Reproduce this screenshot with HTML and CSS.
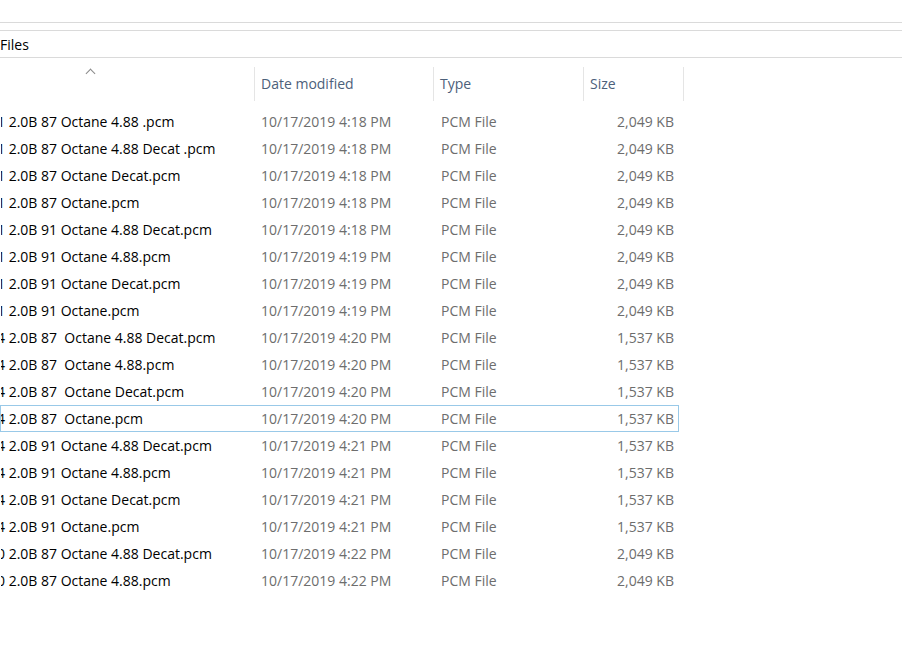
FILE: index.html
```html
<!DOCTYPE html>
<html lang="en">
<head>
  <meta charset="UTF-8">
  <title>Files</title>
  <link rel="stylesheet" href="styles.css">
</head>
<body>
  <div class="ribbon"></div>
  <div class="address"><span class="crumb">Files</span></div>

  <div class="list-header">
    <div class="col name-col"><span class="sort-arrow"></span></div>
    <div class="col">Date modified</div>
    <div class="col">Type</div>
    <div class="col">Size</div>
  </div>

  <div class="rows">
    <div class="row"><span class="name">1 2.0B 87 Octane 4.88 .pcm</span><span>10/17/2019 4:18 PM</span><span>PCM File</span><span class="size">2,049 KB</span></div>
    <div class="row"><span class="name">1 2.0B 87 Octane 4.88 Decat .pcm</span><span>10/17/2019 4:18 PM</span><span>PCM File</span><span class="size">2,049 KB</span></div>
    <div class="row"><span class="name">1 2.0B 87 Octane Decat.pcm</span><span>10/17/2019 4:18 PM</span><span>PCM File</span><span class="size">2,049 KB</span></div>
    <div class="row"><span class="name">1 2.0B 87 Octane.pcm</span><span>10/17/2019 4:18 PM</span><span>PCM File</span><span class="size">2,049 KB</span></div>
    <div class="row"><span class="name">1 2.0B 91 Octane 4.88 Decat.pcm</span><span>10/17/2019 4:18 PM</span><span>PCM File</span><span class="size">2,049 KB</span></div>
    <div class="row"><span class="name">1 2.0B 91 Octane 4.88.pcm</span><span>10/17/2019 4:19 PM</span><span>PCM File</span><span class="size">2,049 KB</span></div>
    <div class="row"><span class="name">1 2.0B 91 Octane Decat.pcm</span><span>10/17/2019 4:19 PM</span><span>PCM File</span><span class="size">2,049 KB</span></div>
    <div class="row"><span class="name">1 2.0B 91 Octane.pcm</span><span>10/17/2019 4:19 PM</span><span>PCM File</span><span class="size">2,049 KB</span></div>
    <div class="row"><span class="name">4 2.0B 87&nbsp; Octane 4.88 Decat.pcm</span><span>10/17/2019 4:20 PM</span><span>PCM File</span><span class="size">1,537 KB</span></div>
    <div class="row"><span class="name">4 2.0B 87&nbsp; Octane 4.88.pcm</span><span>10/17/2019 4:20 PM</span><span>PCM File</span><span class="size">1,537 KB</span></div>
    <div class="row"><span class="name">4 2.0B 87&nbsp; Octane Decat.pcm</span><span>10/17/2019 4:20 PM</span><span>PCM File</span><span class="size">1,537 KB</span></div>
    <div class="row selected"><span class="name">4 2.0B 87&nbsp; Octane.pcm</span><span>10/17/2019 4:20 PM</span><span>PCM File</span><span class="size">1,537 KB</span></div>
    <div class="row"><span class="name">4 2.0B 91 Octane 4.88 Decat.pcm</span><span>10/17/2019 4:21 PM</span><span>PCM File</span><span class="size">1,537 KB</span></div>
    <div class="row"><span class="name">4 2.0B 91 Octane 4.88.pcm</span><span>10/17/2019 4:21 PM</span><span>PCM File</span><span class="size">1,537 KB</span></div>
    <div class="row"><span class="name">4 2.0B 91 Octane Decat.pcm</span><span>10/17/2019 4:21 PM</span><span>PCM File</span><span class="size">1,537 KB</span></div>
    <div class="row"><span class="name">4 2.0B 91 Octane.pcm</span><span>10/17/2019 4:21 PM</span><span>PCM File</span><span class="size">1,537 KB</span></div>
    <div class="row"><span class="name">0 2.0B 87 Octane 4.88 Decat.pcm</span><span>10/17/2019 4:22 PM</span><span>PCM File</span><span class="size">2,049 KB</span></div>
    <div class="row"><span class="name">0 2.0B 87 Octane 4.88.pcm</span><span>10/17/2019 4:22 PM</span><span>PCM File</span><span class="size">2,049 KB</span></div>
  </div>
</body>
</html>
```

FILE: styles.css
```css
* { box-sizing: border-box; margin: 0; padding: 0; }
body { font-family: "Open Sans", "Noto Sans", sans-serif; font-size: 14px; background: #fff; color: #000; overflow: hidden; }

.ribbon { height: 23px; border-bottom: 1px solid #dadada; }
.address { margin-top: 7px; height: 28px; border-top: 1px solid #dadada; border-bottom: 1px solid #dadada; display: flex; align-items: center; }
.crumb { font-size: 14px; color: #000; }

.list-header { display: grid; grid-template-columns: 255px 179px 150px 100px; height: 43px; padding-top: 9px; }
.list-header .col { border-right: 1px solid #e5e5e5; color: #4c607a; padding-left: 6px; padding-top: 7px; }
.list-header .name-col { padding-left: 0; padding-top: 0; }
.sort-arrow { display: block; width: 7px; height: 7px; margin-left: 87px; margin-top: 3px; border-left: 1px solid #8a8a8a; border-top: 1px solid #8a8a8a; transform: rotate(45deg); }

.rows { margin-top: 7px; }
.row { display: grid; grid-template-columns: 254px 180px 150px 95px; width: 679px; height: 27px; line-height: 25px; border: 1px solid transparent; color: #6d6d6d; }
.row span { padding-left: 6px; white-space: nowrap; }
.row .name { color: #000; padding-left: 0; text-indent: -4px; overflow: hidden; }
.row .size { text-align: right; padding-right: 6px; }
.row.selected { border-color: #99c9e8; }
```
